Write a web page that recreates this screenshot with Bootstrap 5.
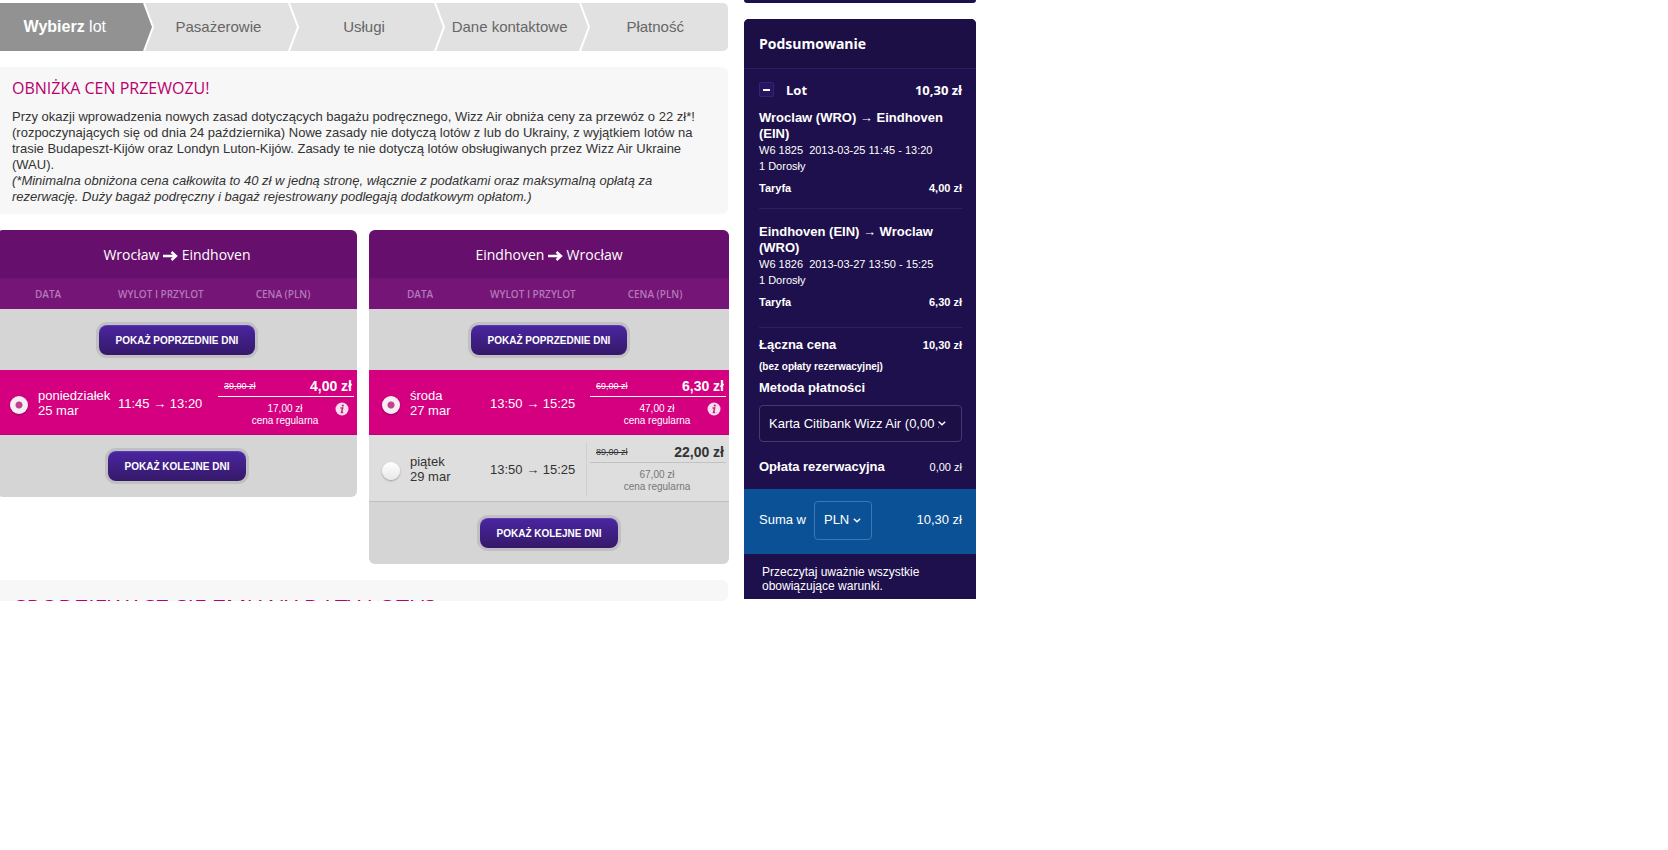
<!DOCTYPE html>
<html lang="pl">
<head>
<meta charset="utf-8">
<meta name="viewport" content="width=device-width, initial-scale=1">
<title>Wybierz lot</title>
<link href="https://cdn.jsdelivr.net/npm/bootstrap@5.3.0/dist/css/bootstrap.min.css" rel="stylesheet">
<style>
body{font-family:"Liberation Sans",Arial,sans-serif;font-size:13px;line-height:16px;color:#333;background:#fff;overflow-x:hidden}
.booking{max-width:976px}
.main-col{min-width:0}
.side-col{width:232px}
.title-font{font-family:"Open Sans","Noto Sans",sans-serif}
.steps{background:#e1e1e1;height:48px;border-radius:0 5px 5px 0;margin-top:3px;overflow:hidden}
.steps a{color:#666;font-size:15px;text-decoration:none}
.steps .current{background:#929292;color:#fff;font-size:16px}
.steps svg{right:-9px;top:0;z-index:1}
.notice{background:#f7f7f7;border-radius:0 6px 6px 0;padding:9px 20px 9px 12px}
.notice h2{font-size:16px;line-height:24px;color:#b8006f;margin-bottom:9px}
.notice-cut{height:19px;padding-left:14px;padding-top:12px}
.notice-cut h2{font-size:23px;line-height:32px}
.flights{margin-left:-3px;margin-right:-1px;column-gap:12px}
.flight{background:#d5d5d5;border-radius:6px}
.flight h3{background:#670f6c;color:#fff;font-size:14px;line-height:49px;height:49px;border-bottom:1px solid #6f1673}
.flight table{table-layout:fixed;border-collapse:separate;border-spacing:0}
.flight th{height:30px;background:#741577;color:#b579b8;font-size:10px;font-weight:600;padding:0}
.flight th:first-child{padding-left:38px}
.flight th:last-child{padding-right:5px}
.flight td{padding:0;vertical-align:middle}
.c-radio{width:41px}.c-day{width:80px}.c-time{width:96px}
.more td{height:61px;text-align:center}
.more:last-child td{height:62px}
.btn-days{background:linear-gradient(#4a25a0,#351868);color:#fff;font-size:10px;line-height:14px;font-weight:700;border:0;border-top:1px solid #5a3ab5;border-radius:8px;padding:8px 16px 7px;height:30px;box-shadow:0 0 0 3px #c0bfc1}
.btn-days:hover{background:#4a25a0;color:#fff}
.wide{width:156px}.narrow{width:138px}
.flight .fare td{height:67px;background:#dedede;border-bottom:1px solid #bfbfbf;line-height:15px;padding-top:2px}
.flight .chosen td{height:65px;background:#d4007f;color:#fff;border-bottom-color:#bc0078}
.fare input{appearance:none;width:18px;height:18px;border-radius:50%;background:linear-gradient(#fff,#e8e8e8);box-shadow:0 1px 2px rgba(0,0,0,.3);margin:4px 0 0 13px;display:block}
.fare input:checked{background:radial-gradient(circle,#c2408e 0 3px,#f6eef2 4px)}
.price{border-left:1px solid #d0d0d0;margin:0 3px 0 0;padding-left:3px;height:54px}
.chosen .price{border-color:transparent}
.price-now{border-bottom:1px solid #c2c2c2;height:21px;padding:0 2px 0 6px}
.chosen .price-now{border-color:#fff}
.price-now del{font-size:9px}
.price-now strong{font-size:14px}
.regular{font-size:10px;line-height:12px;color:#777;padding:6px 2px 0 0}
.chosen .regular{color:#fff}
.regular svg{right:5px;top:5px}
.stub{background:#1e104c;height:3px;border-radius:0 0 5px 5px}
.summary{background:#1e104c;color:#fff;border-radius:5px 5px 0 0;margin-top:16px;overflow:hidden}
.summary h2{background:#1c0f45;border-bottom:1px solid #2b1d5c;font-size:14px;line-height:49px;height:50px;padding-left:15px}
.inner{padding:0 14px 0 15px}
.row-lot{height:41px;font-size:13px}
.fold{width:15px;height:15px;border:1px solid #35207a;border-radius:2px;background:#271560}
.tiny{font-size:11px}
.mini{font-size:10px}
.leg{border-bottom:1px solid #2e2060}
.leg h3,.sum-label{font-size:13px;line-height:16px;font-weight:700}
.leg-1{height:99px}.leg-2{height:119px;padding-top:15px}
.fare-line{padding-top:6px}
.net-price{padding-top:9px}
.net-note{padding-top:6px}
.pay-label{padding-top:5px;margin-bottom:9px}
.fee-line{padding:17px 0 14px}
.picker{appearance:none;color:#fff;font-size:13px;border:1px solid #463a6c;border-radius:4px;background:#1c0f45 url("data:image/svg+xml,%3Csvg xmlns='http://www.w3.org/2000/svg' width='8' height='5'%3E%3Cpath d='M.8.8 4 3.8 7.2.8' fill='none' stroke='white' stroke-width='1.4'/%3E%3C/svg%3E") no-repeat right 15px center;height:37px;padding:0 22px 0 9px}
.total{background:#0b5196;height:65px;padding:0 14px 3px 15px}
.total .picker{background-color:transparent;border-color:#3d78b0;width:58px;height:39px;margin-left:8px;background-position:right 10px center}
.terms{font-size:12px;line-height:14px;padding:11px 18px 6px}
</style>
</head>
<body>
<div class="booking d-flex">
  <main class="main-col flex-grow-1">
    <nav class="steps d-flex" aria-label="Etapy rezerwacji">
      <a href="#" class="current flex-fill w-100 position-relative d-flex align-items-center justify-content-center"><span class="pe-3"><b>Wybierz</b> lot</span><svg class="position-absolute" width="13" height="48"><path d="M2 0 11 24 2 48H13V0z" fill="#e1e1e1"/><path d="M0 0H2L11 24 2 48H0z" fill="#929292"/><path d="M2 0 11 24 2 48" fill="none" stroke="#fff" stroke-width="2"/></svg></a>
      <a href="#" class="flex-fill w-100 position-relative d-flex align-items-center justify-content-center">Pasażerowie<svg class="position-absolute" width="13" height="48"><path d="M2 0 11 24 2 48" fill="none" stroke="#fff" stroke-width="2"/></svg></a>
      <a href="#" class="flex-fill w-100 position-relative d-flex align-items-center justify-content-center">Usługi<svg class="position-absolute" width="13" height="48"><path d="M2 0 11 24 2 48" fill="none" stroke="#fff" stroke-width="2"/></svg></a>
      <a href="#" class="flex-fill w-100 position-relative d-flex align-items-center justify-content-center text-nowrap">Dane kontaktowe<svg class="position-absolute" width="13" height="48"><path d="M2 0 11 24 2 48" fill="none" stroke="#fff" stroke-width="2"/></svg></a>
      <a href="#" class="flex-fill w-100 d-flex align-items-center justify-content-center">Płatność</a>
    </nav>
    <section class="notice mt-3">
      <h2 class="title-font">OBNIŻKA CEN PRZEWOZU!</h2>
      <p class="mb-0">Przy okazji wprowadzenia nowych zasad dotyczących bagażu podręcznego, Wizz Air obniża ceny za przewóz o 22 zł*!<br>(rozpoczynających się od dnia 24 października) Nowe zasady nie dotyczą lotów z lub do Ukrainy, z wyjątkiem lotów na<br>trasie Budapeszt-Kijów oraz Londyn Luton-Kijów. Zasady te nie dotyczą lotów obsługiwanych przez Wizz Air Ukraine<br>(WAU).<br><i>(*Minimalna obniżona cena całkowita to 40 zł w jedną stronę, włącznie z podatkami oraz maksymalną opłatą za<br>rezerwację. Duży bagaż podręczny i bagaż rejestrowany podlegają dodatkowym opłatom.)</i></p>
    </section>
    <div class="flights d-flex align-items-start mt-3">
      <section class="flight flex-fill w-100 overflow-hidden">
        <h3 class="title-font text-center mb-0 fw-normal">Wrocław <svg width="15" height="10" viewBox="0 0 15 10"><path d="M0 5h12M8.500 1 13 5 8.500 9" fill="none" stroke="#fff" stroke-width="2.400"/></svg> Eindhoven</h3>
        <table class="w-100">
          <colgroup><col class="c-radio"><col class="c-day"><col class="c-time"><col></colgroup>
          <thead><tr class="title-font"><th colspan="2">DATA</th><th>WYLOT&nbsp;I&nbsp;PRZYLOT</th><th class="text-center">CENA (PLN)</th></tr></thead>
          <tbody>
            <tr class="more"><td colspan="4"><button type="button" class="btn btn-days wide text-nowrap">POKAŻ POPRZEDNIE DNI</button></td></tr>
            <tr class="fare chosen">
              <td><input type="radio" name="out" id="out1" checked></td>
              <td><label for="out1">poniedziałek<br>25 mar</label></td>
              <td>11:45 → 13:20</td>
              <td><div class="price"><div class="price-now d-flex justify-content-between align-items-center"><del>39,00 zł</del><strong>4,00 zł</strong></div>
                <div class="regular position-relative text-center">17,00 zł<br>cena regularna<svg class="position-absolute" width="14" height="14" viewBox="0 0 14 14"><circle cx="7" cy="7" r="6.500" fill="#fbdcee"/><path d="M5.500 6h2.200L6.500 10.500H8.200" fill="none" stroke="#b0307c" stroke-width="1.500"/><circle cx="7.800" cy="3.600" r="1.100" fill="#b0307c"/></svg></div></div></td>
            </tr>
            <tr class="more"><td colspan="4"><button type="button" class="btn btn-days narrow text-nowrap">POKAŻ KOLEJNE DNI</button></td></tr>
          </tbody>
        </table>
      </section>
      <section class="flight flex-fill w-100 overflow-hidden">
        <h3 class="title-font text-center mb-0 fw-normal">Eindhoven <svg width="15" height="10" viewBox="0 0 15 10"><path d="M0 5h12M8.500 1 13 5 8.500 9" fill="none" stroke="#fff" stroke-width="2.400"/></svg> Wrocław</h3>
        <table class="w-100">
          <colgroup><col class="c-radio"><col class="c-day"><col class="c-time"><col></colgroup>
          <thead><tr class="title-font"><th colspan="2">DATA</th><th>WYLOT&nbsp;I&nbsp;PRZYLOT</th><th class="text-center">CENA (PLN)</th></tr></thead>
          <tbody>
            <tr class="more"><td colspan="4"><button type="button" class="btn btn-days wide text-nowrap">POKAŻ POPRZEDNIE DNI</button></td></tr>
            <tr class="fare chosen">
              <td><input type="radio" name="back" id="back1" checked></td>
              <td><label for="back1">środa<br>27 mar</label></td>
              <td>13:50 → 15:25</td>
              <td><div class="price"><div class="price-now d-flex justify-content-between align-items-center"><del>69,00 zł</del><strong>6,30 zł</strong></div>
                <div class="regular position-relative text-center">47,00 zł<br>cena regularna<svg class="position-absolute" width="14" height="14" viewBox="0 0 14 14"><circle cx="7" cy="7" r="6.500" fill="#fbdcee"/><path d="M5.500 6h2.200L6.500 10.500H8.200" fill="none" stroke="#b0307c" stroke-width="1.500"/><circle cx="7.800" cy="3.600" r="1.100" fill="#b0307c"/></svg></div></div></td>
            </tr>
            <tr class="fare">
              <td><input type="radio" name="back" id="back2"></td>
              <td><label for="back2">piątek<br>29 mar</label></td>
              <td>13:50 → 15:25</td>
              <td><div class="price"><div class="price-now d-flex justify-content-between align-items-center"><del>89,00 zł</del><strong>22,00 zł</strong></div>
                <div class="regular text-center">67,00 zł<br>cena regularna</div></div></td>
            </tr>
            <tr class="more"><td colspan="4"><button type="button" class="btn btn-days narrow text-nowrap">POKAŻ KOLEJNE DNI</button></td></tr>
          </tbody>
        </table>
      </section>
    </div>
    <section class="notice notice-cut overflow-hidden mt-3">
      <h2 class="title-font">SPODZIEWASZ SIĘ ZMIANY DATY LOTU?</h2>
    </section>
  </main>
  <aside class="side-col flex-shrink-0 ms-3">
    <div class="stub"></div>
    <section class="summary">
      <h2 class="title-font fw-bold mb-0">Podsumowanie</h2>
      <div class="inner">
        <div class="row-lot d-flex align-items-center fw-bold"><button type="button" class="fold d-flex align-items-center justify-content-center p-0" aria-label="Zwiń"><svg width="7" height="2"><path d="M0 1h7" stroke="#fff" stroke-width="2"/></svg></button><span class="title-font ms-2 ps-1">Lot</span><span class="title-font ms-auto">10,30 zł</span></div>
        <div class="leg leg-1"><h3 class="mb-0">Wroclaw (WRO) → Eindhoven (EIN)</h3><div class="tiny">W6 1825&nbsp; 2013-03-25 11:45 - 13:20<br>1 Dorosły</div>
          <div class="fare-line tiny fw-bold d-flex justify-content-between"><span>Taryfa</span><span>4,00 zł</span></div></div>
        <div class="leg leg-2"><h3 class="mb-0">Eindhoven (EIN) → Wroclaw (WRO)</h3><div class="tiny">W6 1826&nbsp; 2013-03-27 13:50 - 15:25<br>1 Dorosły</div>
          <div class="fare-line tiny fw-bold d-flex justify-content-between"><span>Taryfa</span><span>6,30 zł</span></div></div>
        <div class="net-price d-flex justify-content-between sum-label"><span>Łączna cena</span><span class="tiny">10,30 zł</span></div>
        <div class="net-note mini fw-bold">(bez opłaty rezerwacyjnej)</div>
        <label for="pay" class="pay-label sum-label d-block">Metoda płatności</label>
        <select id="pay" class="picker w-100"><option>Karta Citibank Wizz Air (0,00 zł)</option></select>
        <div class="fee-line d-flex justify-content-between sum-label"><span>Opłata rezerwacyjna</span><span class="tiny fw-normal">0,00 zł</span></div>
      </div>
      <div class="total d-flex align-items-center"><label for="cur">Suma w</label><select id="cur" class="picker"><option>PLN</option></select><span class="ms-auto">10,30 zł</span></div>
      <p class="terms mb-0">Przeczytaj uważnie wszystkie obowiązujące warunki.</p>
    </section>
  </aside>
</div>
</body>
</html>
